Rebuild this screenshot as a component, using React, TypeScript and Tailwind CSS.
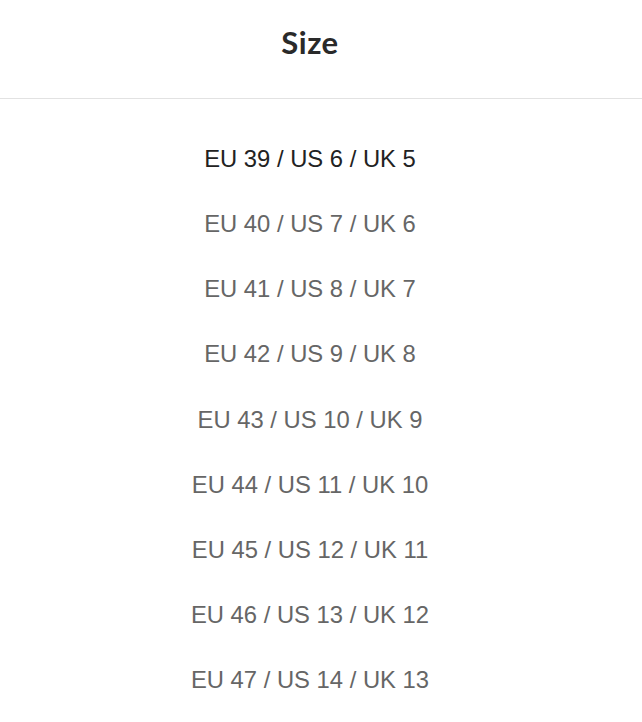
import React from "react";

const sizes = [
  "EU 39 / US 6 / UK 5",
  "EU 40 / US 7 / UK 6",
  "EU 41 / US 8 / UK 7",
  "EU 42 / US 9 / UK 8",
  "EU 43 / US 10 / UK 9",
  "EU 44 / US 11 / UK 10",
  "EU 45 / US 12 / UK 11",
  "EU 46 / US 13 / UK 12",
  "EU 47 / US 14 / UK 13",
];

const App: React.FC = () => {
  return (
    <div className="min-h-screen bg-white">
      <div className="h-[99px] flex items-center justify-center pr-[22px] border-b border-[#e2e2e2]">
        <h1 className="font-['Lato',sans-serif] font-bold text-[31px] tracking-[0.5px] text-[#2a2a2a] -mt-[14px]">
          Size
        </h1>
      </div>
      <ul className="pt-[27px] pr-[22px] font-['Liberation_Sans',Arial,sans-serif]">
        {sizes.map((s, i) => (
          <li
            key={s}
            className={
              "h-[65.2px] flex items-center justify-center text-[23.8px] " +
              (i === 0 ? "text-[#222222]" : "text-[#666666]")
            }
          >
            {s}
          </li>
        ))}
      </ul>
    </div>
  );
};

export default App;
